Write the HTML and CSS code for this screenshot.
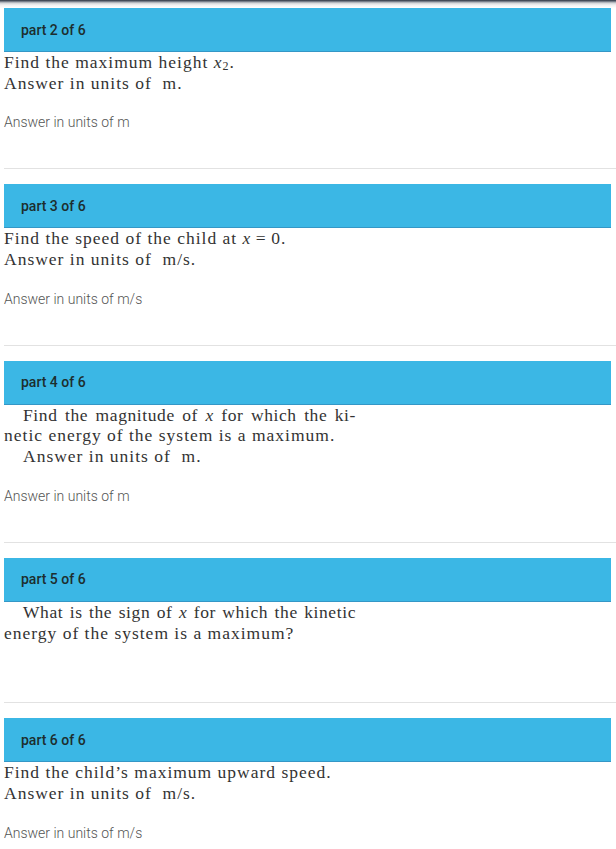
FILE: index.html
```html
<!DOCTYPE html>
<html>
<head>
<meta charset="utf-8">
<link rel="stylesheet" href="styles.css">
</head>
<body>
<div class="topbar"></div>
<main class="page">
  <section class="part">
    <div class="part-head">part 2 of 6</div>
    <div class="question">
      <p class="line">Find the maximum height <i>x</i><sub>2</sub>.</p>
      <p class="line">Answer in units of &nbsp;m.</p>
    </div>
    <div class="answer">Answer in units of m</div>
  </section>
  <hr class="sep">
  <section class="part">
    <div class="part-head">part 3 of 6</div>
    <div class="question">
      <p class="line">Find the speed of the child at <i>x</i>&#8201;=&#8201;0.</p>
      <p class="line">Answer in units of &nbsp;m/s.</p>
    </div>
    <div class="answer">Answer in units of m/s</div>
  </section>
  <hr class="sep">
  <section class="part">
    <div class="part-head">part 4 of 6</div>
    <div class="question">
      <p class="line indent just">Find the magnitude of <i>x</i> for which the ki-</p>
      <p class="line">netic energy of the system is a maximum.</p>
      <p class="line indent">Answer in units of &nbsp;m.</p>
    </div>
    <div class="answer">Answer in units of m</div>
  </section>
  <hr class="sep">
  <section class="part">
    <div class="part-head">part 5 of 6</div>
    <div class="question">
      <p class="line indent just">What is the sign of <i>x</i> for which the kinetic</p>
      <p class="line">energy of the system is a maximum?</p>
    </div>
    <div class="answer"></div>
  </section>
  <hr class="sep">
  <section class="part">
    <div class="part-head">part 6 of 6</div>
    <div class="question">
      <p class="line">Find the child’s maximum upward speed.</p>
      <p class="line">Answer in units of &nbsp;m/s.</p>
    </div>
    <div class="answer">Answer in units of m/s</div>
  </section>
</main>
</body>
</html>
```
FILE: styles.css
```css
html, body {
  margin: 0;
  padding: 0;
  background: #ffffff;
}

.topbar {
  height: 8px;
  background: linear-gradient(to bottom, #2b3440 0px, #5a6270 1px, #cfd2d6 3px, #f1f1f2 5px, #ffffff 8px);
}

.page {
  padding-left: 4px;
  display: flex;
  flex-direction: column;
}

.part {
  display: flex;
  flex-direction: column;
  padding-bottom: 38px;
}

.part-head {
  width: 590px;
  height: 43px;
  margin-right: 5px;
  padding-left: 17px;
  background: #3bb7e5;
  border-bottom: 1px solid #3497c6;
  display: flex;
  align-items: center;
  font-family: Roboto, "Liberation Sans", sans-serif;
  font-weight: 500;
  font-size: 14px;
  color: #1d2e2e;
}

.question {
  width: 352px;
  font-family: "Liberation Serif", serif;
  font-size: 17.5px;
  color: #333333;
}

.line {
  margin: 0;
  line-height: 20.7px;
  height: 20.7px;
  white-space: nowrap;
  letter-spacing: 1px;
}

.indent {
  padding-left: 19px;
}

.just {
  white-space: normal;
  letter-spacing: 0.6px;
  text-align: justify;
  text-align-last: justify;
}

.question sub {
  font-size: 12px;
  vertical-align: -2px;
  line-height: 0;
}

.answer {
  margin-top: 21px;
  min-height: 0;
  line-height: 16px;
  font-family: Roboto, "Liberation Sans", sans-serif;
  font-weight: 300;
  font-size: 14px;
  color: #555;
}

.answer:empty {
  height: 0;
}

.sep {
  margin: 0 0 15px 0;
  border: 0;
  border-top: 1px solid #e2e2e2;
  height: 0;
}
```
